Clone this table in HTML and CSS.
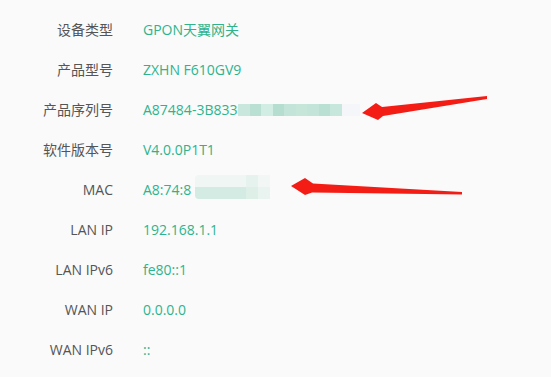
FILE: index.html
```html
<!DOCTYPE html>
<html lang="zh-CN">
<head>
<meta charset="utf-8">
<title>设备信息</title>
<link rel="stylesheet" href="styles.css">
</head>
<body>
<div class="info">
  <div class="row"><div class="label">设备类型</div><div class="value">GPON天翼网关</div></div>
  <div class="row"><div class="label">产品型号</div><div class="value">ZXHN F610GV9</div></div>
  <div class="row"><div class="label">产品序列号</div><div class="value">A87484-3B833<span class="mosaic mosaic-sn"><i class="c1"></i><i class="c2"></i><i class="c3"></i><i class="c4"></i><i class="c5"></i><i class="c6"></i><i class="c7"></i><i class="c8"></i><i class="c9"></i><i class="c10"></i></span></div></div>
  <div class="row"><div class="label">软件版本号</div><div class="value">V4.0.0P1T1</div></div>
  <div class="row"><div class="label">MAC</div><div class="value">A8:74:8<span class="mosaic mosaic-mac"><i class="m1"></i><i class="m2"></i><i class="m3"></i><i class="m4"></i><i class="m5"></i><i class="m6"></i></span></div></div>
  <div class="row"><div class="label">LAN IP</div><div class="value">192.168.1.1</div></div>
  <div class="row"><div class="label">LAN IPv6</div><div class="value">fe80::1</div></div>
  <div class="row"><div class="label">WAN IP</div><div class="value">0.0.0.0</div></div>
  <div class="row"><div class="label">WAN IPv6</div><div class="value">::</div></div>
</div>
<svg class="arrows" width="551" height="377" viewBox="0 0 551 377" aria-hidden="true">
  <polygon points="362,113 376,103 382,107 487,96 487,99 383,116 378,120" fill="#f41d16"/>
  <polygon points="291,186 305,178 313,183.5 462,192 462,194.5 312,192.5 305,195" fill="#f41d16"/>
</svg>
</body>
</html>
```
FILE: styles.css
```css
html, body {
  margin: 0;
  padding: 0;
  background: #fafafb;
}
body {
  position: relative;
  width: 551px;
  height: 377px;
  overflow: hidden;
  font-family: "Open Sans", "Noto Sans CJK SC", sans-serif;
  font-size: 14px;
}
.info {
  padding-top: 9px;
  display: flex;
  flex-direction: column;
}
.row {
  display: flex;
  align-items: center;
  height: 40px;
  gap: 30px;
}
.label {
  width: 113px;
  text-align: right;
  color: #555;
}
.value {
  position: relative;
  color: #2db48c;
  white-space: nowrap;
}
.mosaic {
  position: absolute;
  display: flex;
}
.mosaic i {
  display: block;
}
.mosaic-sn {
  left: 95px;
  top: 4px;
  height: 12px;
}
.mosaic-sn i { width: 11.5px; height: 12px; }
.mosaic-sn .c1 { background: #c9e7dd; }
.mosaic-sn .c2 { background: #b9e0d2; }
.mosaic-sn .c3 { background: #d2ede4; }
.mosaic-sn .c4 { background: #b6ded0; }
.mosaic-sn .c5 { background: #c3e4d8; }
.mosaic-sn .c6 { background: #c6e6da; }
.mosaic-sn .c7 { background: #c2e4d9; }
.mosaic-sn .c8 { background: #b9e0d2; }
.mosaic-sn .c9 { background: #c7e6dc; }
.mosaic-sn .c10 { background: #f4f6f9; width: 18px; }
.mosaic-mac {
  left: 52px;
  top: -5px;
  flex-wrap: wrap;
  width: 75px;
}
.mosaic-mac i { height: 12px; }
.mosaic-mac .m1 { width: 51px; background: #eff6f3; border-top-left-radius: 4px; }
.mosaic-mac .m2 { width: 12px; background: #e5f2ed; }
.mosaic-mac .m3 { width: 12px; background: #f2f7f5; }
.mosaic-mac .m4 { width: 51px; background: #d3ebe2; border-bottom-left-radius: 4px; }
.mosaic-mac .m5 { width: 12px; background: #deefe8; }
.mosaic-mac .m6 { width: 12px; background: #e9f3ef; }
.arrows {
  position: absolute;
  left: 0;
  top: 0;
  pointer-events: none;
}
```
